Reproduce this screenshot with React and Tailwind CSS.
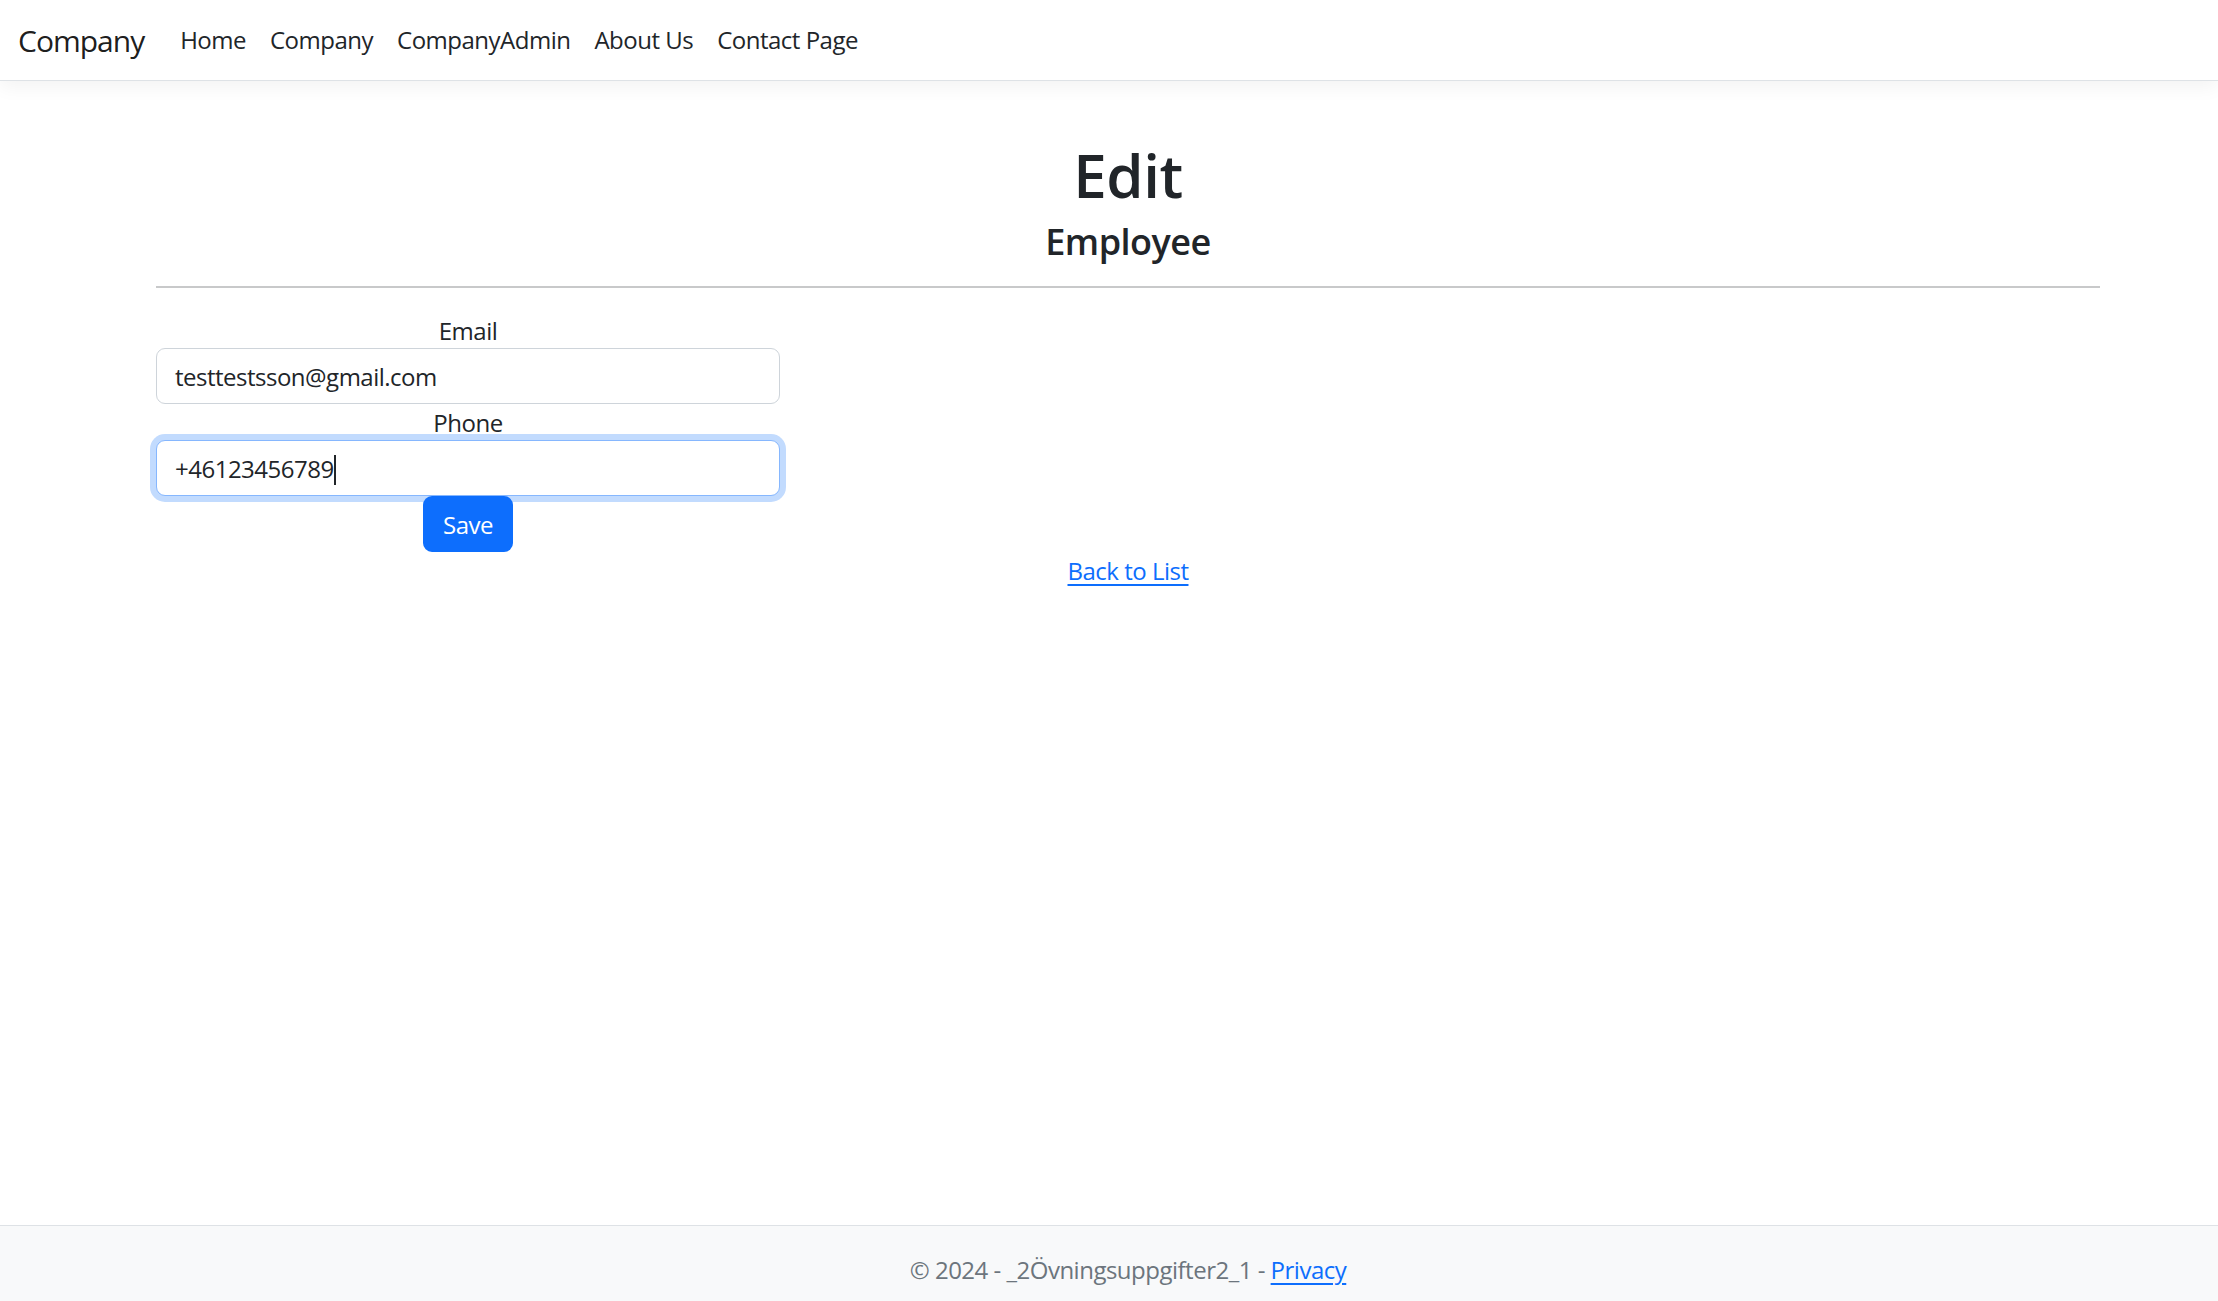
const links = ["Home", "Company", "CompanyAdmin", "About Us", "Contact Page"];

const Field = ({ label, value, focused }) => (
	<div>
		<div className="leading-[36px] pt-[1px] -mb-[1px]">{label}</div>
		<div
			className={
				"h-[56px] rounded-[9px] border bg-white px-[18px] pt-[10px] pb-[8px] text-left leading-[36px] " +
				(focused
					? "border-[#86b7fe] shadow-[0_0_0_6px_rgba(13,110,253,0.25)]"
					: "border-[#ced4da]")
			}
		>
			{value}
			{focused && <span className="inline-block w-[2px] h-[30px] bg-[#212529] align-middle -mt-[4px]"></span>}
		</div>
	</div>
);

const App = () => {
	return (
		<div className="h-screen overflow-hidden flex flex-col bg-white text-[#212529] text-[24px] leading-[36px] tracking-[-0.5px] font-['Open_Sans',sans-serif]">
			<header className="h-[81px] shrink-0 border-b border-[#dee2e6] bg-white shadow-[0_6px_18px_rgba(0,0,0,0.05)]">
				<nav className="h-full flex items-center px-[18px]">
					<a className="text-[30px] leading-[45px] tracking-[-1px] text-black/90 mr-[24px]">Company</a>
					{links.map((l) => (
						<a key={l} className="px-[12px] text-[#212529]">
							{l}
						</a>
					))}
				</nav>
			</header>

			<main className="flex-1">
				<div className="ml-[138px] w-[1980px] px-[18px] pt-[54px]">
					<h1 className="text-center text-[60px] leading-[72px] font-semibold pt-[4px] mb-[8px]">Edit</h1>
					<h4 className="text-center text-[36px] leading-[43px] font-semibold pt-[1px] -mb-[1px]">Employee</h4>
					<hr className="mt-[24px] border-0 border-t-2 border-[#c8c9ca]" />

					<div className="mt-[24px] w-[624px] text-center">
						<Field label="Email" value="testtestsson@gmail.com" />
						<Field label="Phone" value="+46123456789" focused />
						<button className="h-[56px] px-[20px] pt-[1px] rounded-[9px] bg-[#0d6efd] text-white leading-[36px]">
							Save
						</button>
					</div>

					<div className="text-center pt-[1px]">
						<a className="text-[#0d6efd] underline underline-offset-[4px]">Back to List</a>
					</div>
				</div>
			</main>

			<footer className="h-[76px] shrink-0 overflow-hidden border-t border-[#dee2e6] bg-[#f8f9fa]">
				<div className="ml-[138px] w-[1980px] px-[18px] text-center leading-[88px] text-[#6c757d] whitespace-nowrap">
					© 2024 - _2Övningsuppgifter2_1 -{" "}
					<a className="text-[#0d6efd] underline underline-offset-[4px]">Privacy</a>
				</div>
			</footer>
		</div>
	);
};

export default App;
